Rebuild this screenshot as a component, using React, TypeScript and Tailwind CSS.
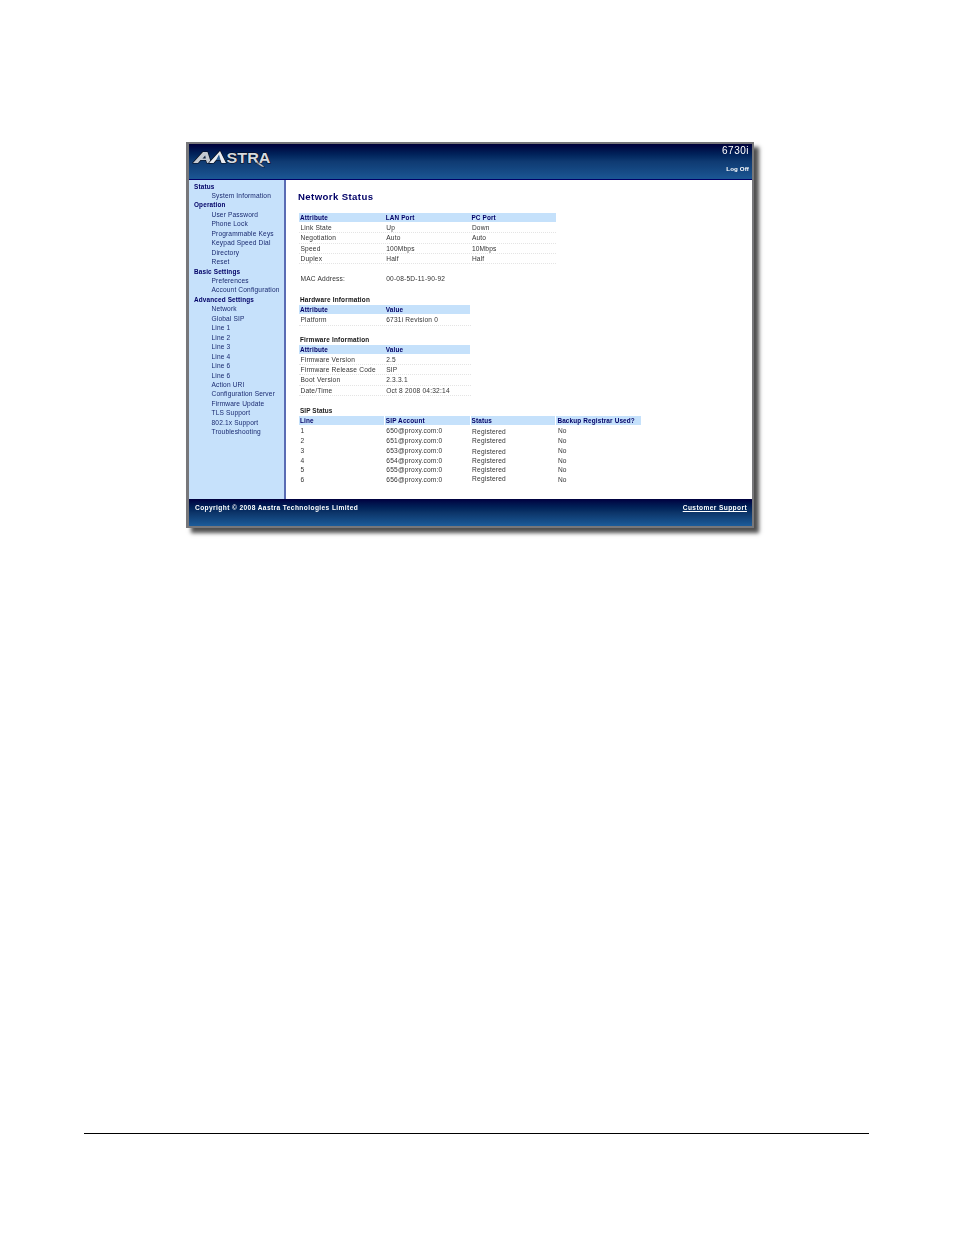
const FONT = "font-['Liberation_Sans',Arial,sans-serif]";

type Nav = { label: string; head?: boolean };

const NAV: Nav[] = [
  { label: "Status", head: true },
  { label: "System Information" },
  { label: "Operation", head: true },
  { label: "User Password" },
  { label: "Phone Lock" },
  { label: "Programmable Keys" },
  { label: "Keypad Speed Dial" },
  { label: "Directory" },
  { label: "Reset" },
  { label: "Basic Settings", head: true },
  { label: "Preferences" },
  { label: "Account Configuration" },
  { label: "Advanced Settings", head: true },
  { label: "Network" },
  { label: "Global SIP" },
  { label: "Line 1" },
  { label: "Line 2" },
  { label: "Line 3" },
  { label: "Line 4" },
  { label: "Line 6" },
  { label: "Line 6" },
  { label: "Action URI" },
  { label: "Configuration Server" },
  { label: "Firmware Update" },
  { label: "TLS Support" },
  { label: "802.1x Support" },
  { label: "Troubleshooting" },
];

function Logo() {
  return (
    <svg width="82" height="20" viewBox="0 0 82 20" className="block">
      <g stroke="#080c18" strokeWidth="1.2" paintOrder="stroke" strokeLinejoin="round">
        <path d="M1 15 L11 4 L15.5 4 L19 15 L15 15 L14 12 L8.5 12 L6 15 Z" fill="#c4c9d2" />
        <path d="M17 15 L28 3 L34 15 L29.5 15 L28.5 12 L24 12 L21.5 15 Z" fill="#e9ecf1" />
      </g>
      <path d="M24 12 L27 6.5 L28.5 12 Z" fill="#2c6096" />
      <path d="M10.5 10.5 L13.2 7.5 L13.8 10.5 Z" fill="#10233f" />
      <text
        x="34.5"
        y="15"
        fontFamily="'Liberation Sans', Arial, sans-serif"
        fontWeight="700"
        fontSize="14.5"
        textLength="44"
        lengthAdjust="spacingAndGlyphs"
        fill="#d6dae0"
        stroke="#080c18"
        strokeWidth="1.2"
        paintOrder="stroke"
      >
        STRA
      </text>
      <path d="M64 15 L70 19 L73 19 L68 15 Z" fill="#c4c9d2" stroke="#080c18" strokeWidth="0.5" />
    </svg>
  );
}

function Head({ cols, gaps }: { cols: string[]; gaps?: boolean }) {
  return (
    <div className={`flex h-[9px] ${gaps ? "gap-px" : ""}`}>
      {cols.map((c) => (
        <div
          key={c}
          className={`${gaps ? "w-[84.8px]" : "w-[85.7px]"} shrink-0 bg-[#c5e1fb] pl-px text-[6.4px] leading-[9px] font-bold tracking-[0.15px] text-[#000066]`}
        >
          {c}
        </div>
      ))}
    </div>
  );
}

function Row({ cells }: { cells: string[] }) {
  return (
    <div className="flex h-[10.35px] border-b border-dotted border-[#e4e4e4]">
      {cells.map((c, i) => (
        <div key={i} className="w-[85.7px] shrink-0 pl-[1.5px] text-[6.6px] leading-[10px] tracking-[0.2px] text-[#333]">
          {c}
        </div>
      ))}
    </div>
  );
}

const SIP: [string, string, number][] = [
  ["1", "650@proxy.com:0", 1],
  ["2", "651@proxy.com:0", 0],
  ["3", "653@proxy.com:0", 1],
  ["4", "654@proxy.com:0", 0],
  ["5", "655@proxy.com:0", 0],
  ["6", "656@proxy.com:0", -1],
];

export default function App() {
  return (
    <div className={`${FONT} h-[1235px] w-[954px] overflow-hidden bg-white`}>
      <div className="pt-[142px] pl-[186px]">
        <div className="flex h-[386px] w-[568px] flex-col border-t-2 border-r-2 border-b-2 border-l-[3px] border-[#77777a] shadow-[5px_5px_4px_#505050] blur-[0.35px]">
          {/* header */}
          <div className="flex h-[35px] shrink-0 items-start justify-between bg-gradient-to-b from-[#00003a] via-[#0f3a72] to-[#1b5794] pr-[3px]">
            <div className="pt-[4px] pl-[3px]">
              <Logo />
            </div>
            <div className="text-right text-white">
              <div className="pt-[1px] text-[10px] leading-[12px] tracking-[0.5px]">6730i</div>
              <div className="pt-[8px] text-[6.2px] leading-[8px] font-bold tracking-[0.1px]">Log Off</div>
            </div>
          </div>
          <div className="h-px shrink-0 bg-[#000066]" />

          {/* body */}
          <div className="flex min-h-0 flex-1">
            <div className="w-[97px] shrink-0 border-r-2 border-[#5a6cb4] bg-[#c6e1fb] pt-[1.5px] pl-[5px]">
              {NAV.map((n, i) => (
                <div
                  key={i}
                  className={
                    n.head
                      ? "text-[6.4px] leading-[9.46px] font-bold tracking-[0.15px] whitespace-nowrap text-[#000066]"
                      : "pl-[17.5px] text-[6.6px] leading-[9.46px] tracking-[0.15px] whitespace-nowrap text-[#1a2a70]"
                  }
                >
                  {n.label}
                </div>
              ))}
            </div>

            <div className="min-w-0 flex-1 bg-white pl-[13px]">
              <h1 className="-ml-px pt-[11px] text-[9.6px] leading-[12px] font-bold tracking-[0.4px] text-[#000066]">Network Status</h1>

              <div className="w-[257px] pt-[10px]">
                <Head cols={["Attribute", "LAN Port", "PC Port"]} />
                <div className="h-px" />
                <Row cells={["Link State", "Up", "Down"]} />
                <Row cells={["Negotiation", "Auto", "Auto"]} />
                <Row cells={["Speed", "100Mbps", "10Mbps"]} />
                <Row cells={["Duplex", "Half", "Half"]} />
              </div>

              <div className="flex pt-[10px] text-[6.6px] leading-[10px] tracking-[0.2px] text-[#333]">
                <div className="w-[85.7px] pl-[1.5px]">MAC Address:</div>
                <div className="pl-[1.5px]">00-08-5D-11-90-92</div>
              </div>

              <div className="w-[172px]">
                <div className="pt-[11px] pl-px text-[6.4px] leading-[10px] font-bold tracking-[0.2px] text-[#111]">Hardware Information</div>
                <Head cols={["Attribute", "Value"]} />
                <div className="h-px" />
                <Row cells={["Platform", "6731i Revision 0"]} />

                <div className="pt-[9px] pl-px text-[6.4px] leading-[10px] font-bold tracking-[0.2px] text-[#111]">Firmware Information</div>
                <Head cols={["Attribute", "Value"]} />
                <div className="h-px" />
                <Row cells={["Firmware Version", "2.5"]} />
                <Row cells={["Firmware Release Code", "SIP"]} />
                <Row cells={["Boot Version", "2.3.3.1"]} />
                <Row cells={["Date/Time", "Oct 8 2008 04:32:14"]} />
              </div>

              <div className="pt-[10px] pl-px text-[6.4px] leading-[10px] font-bold tracking-[0.1px] text-[#222]">SIP Status</div>
              <div className="w-[344px]">
                <Head gaps cols={["Line", "SIP Account", "Status", "Backup Registrar Used?"]} />
                <div className="h-px" />
                {SIP.map(([line, acct, drop]) => (
                  <div key={line} className="flex h-[9.85px] text-[6.6px] leading-[10px] tracking-[0.2px] text-[#333]">
                    <div className="w-[85.8px] shrink-0 pl-[1.5px]">{line}</div>
                    <div className="w-[85.8px] shrink-0 pl-[1.5px]">{acct}</div>
                    <div className="w-[85.8px] shrink-0 pl-[1.5px]">
                      <span className={drop === 1 ? "relative top-[1px]" : drop === -1 ? "relative -top-[1px]" : ""}>Registered</span>
                    </div>
                    <div className="pl-[1.5px]">No</div>
                  </div>
                ))}
              </div>
            </div>
          </div>

          {/* footer */}
          <div className="flex h-[27px] shrink-0 justify-between bg-gradient-to-b from-[#00003f] via-[#0c3468] to-[#1c5c9a] pt-[4px] pr-[5px] pl-[6px] text-[6.6px] leading-[9px] font-bold tracking-[0.4px] text-white">
            <span>Copyright © 2008 Aastra Technologies Limited</span>
            <span className="underline">Customer Support</span>
          </div>
        </div>
      </div>

      <div className="mt-[605px] ml-[84px] h-px w-[785px] bg-black" />
    </div>
  );
}
